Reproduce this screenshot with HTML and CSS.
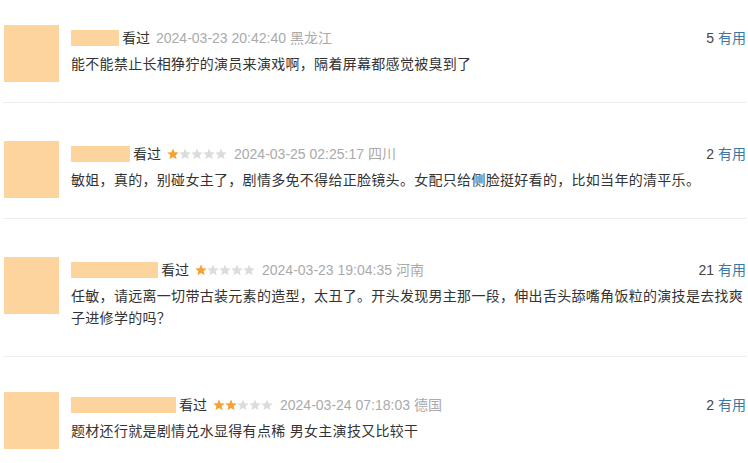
FILE: index.html
```html
<!DOCTYPE html>
<html lang="zh-CN">
<head>
  <meta charset="UTF-8" />
  <meta name="viewport" content="width=device-width, initial-scale=1" />
  <title>短评</title>
  <link rel="stylesheet" href="styles.css">
</head>
<body>
  <!-- star shape, reused in every rating row -->
  <svg width="0" height="0" class="defs">
    <defs>
      <polygon id="star" points="6,0.4 7.6,4.2 11.7,4.5 8.6,7.2 9.6,11.3 6,9.1 2.4,11.3 3.4,7.2 0.3,4.5 4.4,4.2" />
    </defs>
  </svg>

  <div class="comments">

    <div class="comment-item">
      <div class="avatar"></div>
      <div class="comment-body">
        <div class="comment-info">
          <div class="info-left">
            <span class="user-name" style="width: 48px"></span>
            <span class="watched">看过</span>
            <span class="comment-time">2024-03-23 20:42:40</span>
            <span class="comment-location">黑龙江</span>
          </div>
          <div class="votes"><span class="vote-count">5</span> <a href="#">有用</a></div>
        </div>
        <p class="comment-text">能不能禁止长相狰狞的演员来演戏啊，隔着屏幕都感觉被臭到了</p>
      </div>
    </div>

    <div class="comment-item">
      <div class="avatar"></div>
      <div class="comment-body">
        <div class="comment-info">
          <div class="info-left">
            <span class="user-name" style="width: 59px"></span>
            <span class="watched">看过</span>
            <svg class="rating" viewBox="0 0 60 12">
              <use href="#star" class="on" x="0" />
              <use href="#star" x="12" />
              <use href="#star" x="24" />
              <use href="#star" x="36" />
              <use href="#star" x="48" />
            </svg>
            <span class="comment-time">2024-03-25 02:25:17</span>
            <span class="comment-location">四川</span>
          </div>
          <div class="votes"><span class="vote-count">2</span> <a href="#">有用</a></div>
        </div>
        <p class="comment-text">敏姐，真的，别碰女主了，剧情多免不得给正脸镜头。女配只给侧脸挺好看的，比如当年的清平乐。</p>
      </div>
    </div>

    <div class="comment-item">
      <div class="avatar"></div>
      <div class="comment-body">
        <div class="comment-info">
          <div class="info-left">
            <span class="user-name" style="width: 87px"></span>
            <span class="watched">看过</span>
            <svg class="rating" viewBox="0 0 60 12">
              <use href="#star" class="on" x="0" />
              <use href="#star" x="12" />
              <use href="#star" x="24" />
              <use href="#star" x="36" />
              <use href="#star" x="48" />
            </svg>
            <span class="comment-time">2024-03-23 19:04:35</span>
            <span class="comment-location">河南</span>
          </div>
          <div class="votes"><span class="vote-count">21</span> <a href="#">有用</a></div>
        </div>
        <p class="comment-text">任敏，请远离一切带古装元素的造型，太丑了。开头发现男主那一段，伸出舌头舔嘴角饭粒的演技是去找爽子进修学的吗？</p>
      </div>
    </div>

    <div class="comment-item">
      <div class="avatar"></div>
      <div class="comment-body">
        <div class="comment-info">
          <div class="info-left">
            <span class="user-name" style="width: 105px"></span>
            <span class="watched">看过</span>
            <svg class="rating" viewBox="0 0 60 12">
              <use href="#star" class="on" x="0" />
              <use href="#star" class="on" x="12" />
              <use href="#star" x="24" />
              <use href="#star" x="36" />
              <use href="#star" x="48" />
            </svg>
            <span class="comment-time">2024-03-24 07:18:03</span>
            <span class="comment-location">德国</span>
          </div>
          <div class="votes"><span class="vote-count">2</span> <a href="#">有用</a></div>
        </div>
        <p class="comment-text">题材还行就是剧情兑水显得有点稀 男女主演技又比较干</p>
      </div>
    </div>

  </div>
</body>
</html>
```

FILE: styles.css
```css
body {
  margin: 0;
  background: #fff;
  color: #333;
  font-family: "Liberation Sans", Arial, "Noto Sans CJK SC", sans-serif;
  font-size: 14px;
}
.defs {
  position: absolute;
}
.comments {
  padding: 25px 2px 0 3px;
}
.comment-item {
  display: flex;
  align-items: flex-start;
  padding: 38px 0 20px;
  border-bottom: 1px solid #ededed;
}
.comment-item:first-child {
  padding-top: 0;
}
.comment-item:last-child {
  padding-top: 35px;
}
.avatar {
  flex: none;
  width: 55px;
  height: 57px;
  margin-left: 1px;
  background: #fdd39e;
}
.comment-body {
  flex: 1;
  margin-left: 12px;
}
.comment-info {
  display: flex;
  justify-content: space-between;
  align-items: center;
  height: 20px;
  margin-top: 3px;
  line-height: 20px;
}
.info-left {
  display: flex;
  align-items: center;
}
.user-name {
  display: inline-block;
  height: 16px;
  background: #fdd39e;
  margin-right: 3px;
}
.watched {
  color: #333;
  margin-right: 6px;
}
.rating {
  display: block;
  width: 60px;
  height: 12px;
  margin-right: 7px;
  fill: #dcdcdc;
}
.rating .on {
  fill: #f7a22e;
}
.comment-time,
.comment-location {
  color: #aaa;
}
.comment-time {
  margin-right: 4px;
}
.votes {
  color: #444;
  white-space: nowrap;
}
.votes a {
  color: #3d77a5;
  text-decoration: none;
}
.comment-text {
  margin: 5px 0 7px 0;
  line-height: 22px;
  letter-spacing: 0.3px;
  color: #333;
}
```
